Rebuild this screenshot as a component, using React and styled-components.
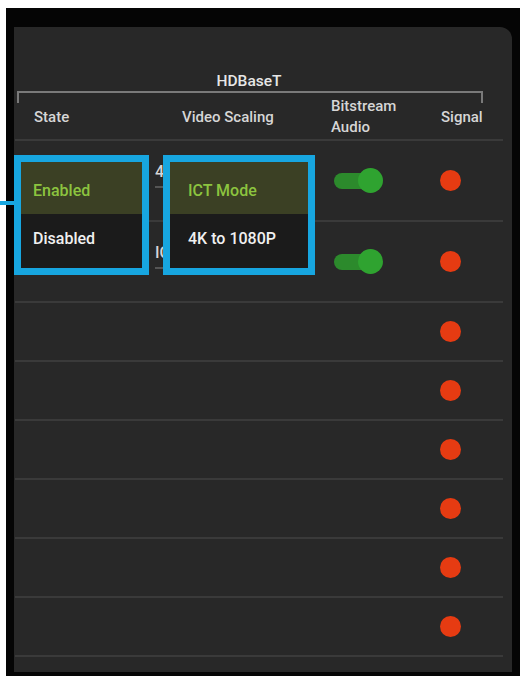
import React from 'react'
import styled, { createGlobalStyle } from 'styled-components'

const GlobalStyle = createGlobalStyle`
  body {
    margin: 0;
    background: #ffffff;
    font-family: Roboto, "Liberation Sans", sans-serif;
  }
`

const rows = [
  { tall: true, scaling: '4K to 1080P', audio: true },
  { tall: true, scaling: 'ICT Mode', audio: true },
  {}, {}, {}, {}, {}, {},
]

const App = () => {
  return (
    <>
      <GlobalStyle />
      <Frame>
        <Panel>
          <GroupTitle>HDBaseT</GroupTitle>
          <Bracket />
          <HeaderRow>
            <HeadCell>State</HeadCell>
            <HeadCell>Video Scaling</HeadCell>
            <HeadCell>Bitstream<br />Audio</HeadCell>
            <HeadCell>Signal</HeadCell>
          </HeaderRow>

          {rows.map((r, i) => (
            <Row key={i} $tall={r.tall}>
              <Cell />
              <Cell>
                {r.scaling && <SelectValue>{r.scaling}</SelectValue>}
              </Cell>
              <Cell>{r.audio && <Toggle />}</Cell>
              <Cell><Dot /></Cell>
            </Row>
          ))}

          <Dropdown $left={0} $width={135}>
            <Connector />
            <Option $selected>Enabled</Option>
            <Option>Disabled</Option>
          </Dropdown>
          <Dropdown $left={149} $width={152}>
            <Option $selected $pad={18}>ICT Mode</Option>
            <Option $pad={18}>4K to 1080P</Option>
          </Dropdown>
        </Panel>
      </Frame>
    </>
  )
}

export default App

const Frame = styled.div`
  box-sizing: border-box;
  width: 514px;
  height: 668px;
  margin: 8px 0 0 6px;
  padding: 19px 8px 4px 8px;
  background: #050505;
`
const Panel = styled.div`
  position: relative;
  height: 100%;
  background: #282828;
  border-top-right-radius: 12px;
  padding-top: 45px;
  box-sizing: border-box;
`
const GroupTitle = styled.div`
  width: 470px;
  text-align: center;
  color: #e6e6e6;
  font-size: 15.5px;
  font-weight: 500;
  line-height: 19px;
`
const Bracket = styled.div`
  margin-left: 3px;
  width: 462px;
  height: 10px;
  border: 2px solid #7a7a7a;
  border-bottom: none;
`
const HeaderRow = styled.div`
  display: grid;
  grid-template-columns: 148px 149px 110px 1fr;
  align-items: center;
  height: 44px;
  margin: -8px 9px 0 1px;
  padding-left: 19px;
  border-bottom: 2px solid #3a3a3a;
`
const HeadCell = styled.div`
  color: #d6d6d6;
  font-size: 15px;
  font-weight: 500;
  line-height: 21px;
`
const Row = styled.div`
  display: grid;
  grid-template-columns: 120px 179px 106px 1fr;
  align-items: center;
  height: ${p => (p.$tall ? 79 : 57)}px;
  margin: 0 9px 0 1px;
  padding-left: 20px;
  border-bottom: 2px solid #3a3a3a;
`
const Cell = styled.div`
  display: flex;
  align-items: center;
`
const SelectValue = styled.div`
  color: #d6d6d6;
  font-size: 16px;
  font-weight: 500;
  width: 140px;
  padding-bottom: 5px;
  margin-top: -12px;
  border-bottom: 2px solid #555;
`
const Toggle = styled.div`
  position: relative;
  width: 38px;
  height: 16px;
  border-radius: 8px;
  background: #2c8a2c;

  &::after {
    content: '';
    position: absolute;
    right: -11px;
    top: -5px;
    width: 25px;
    height: 25px;
    border-radius: 50%;
    background: #2fa330;
  }
`
const Dot = styled.div`
  width: 21px;
  height: 21px;
  border-radius: 50%;
  background: #e63b12;
`
const Dropdown = styled.div`
  position: absolute;
  top: 128px;
  left: ${p => p.$left}px;
  width: ${p => p.$width}px;
  height: 120px;
  box-sizing: border-box;
  border: 7px solid #17a6e0;
  background: #1b1b1b;
  display: flex;
  flex-direction: column;
`
const Connector = styled.div`
  position: absolute;
  left: -21px;
  top: 39px;
  width: 15px;
  height: 4px;
  background: #17a6e0;
`
const Option = styled.div`
  flex: 1;
  display: flex;
  align-items: center;
  padding-left: ${p => p.$pad || 12}px;
  padding-top: ${p => (p.$selected ? 4 : 0)}px;
  padding-bottom: ${p => (p.$selected ? 0 : 6)}px;
  font-size: 16px;
  font-weight: 500;
  color: ${p => (p.$selected ? '#8cc43f' : '#f0f0f0')};
  background: ${p => (p.$selected ? '#3b4024' : '#1b1b1b')};
`
